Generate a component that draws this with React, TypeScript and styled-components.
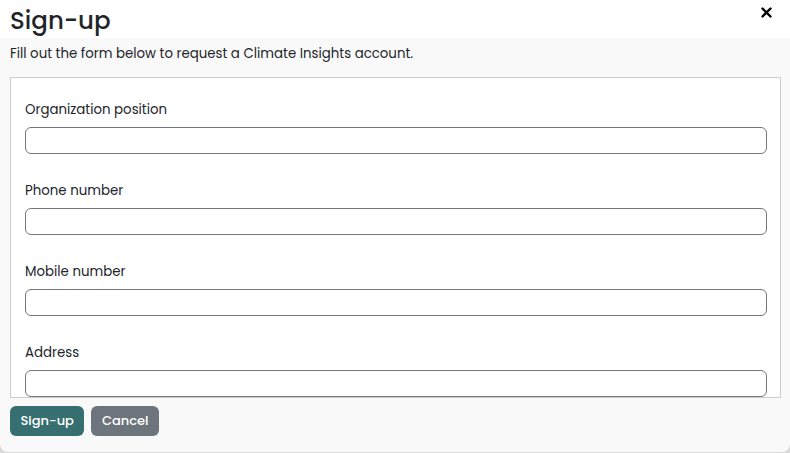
import React from "react";
import styled, { createGlobalStyle } from "styled-components";

const Global = createGlobalStyle`
  html, body { margin: 0; padding: 0; background: #d9d9d9; }
  body { font-family: Poppins, "Open Sans", "Liberation Sans", sans-serif; color: #212529; }
  * { box-sizing: border-box; }
`;

const Modal = styled.div`
  width: 790px;
  height: 452px;
  background: #f9f9f9;
  border-radius: 0 0 8px 8px;
  display: flex;
  flex-direction: column;
  overflow: hidden;
`;

const Header = styled.div`
  background: #ffffff;
  height: 38px;
  padding: 0 10px;
  display: flex;
  align-items: flex-start;
  justify-content: space-between;
`;

const Title = styled.h1`
  margin: 4px 0 0;
  font-size: 24.5px;
  font-weight: 500;
  line-height: 34px;
  color: #212529;
`;

const Close = styled.button`
  border: none;
  background: none;
  padding: 0;
  margin: 5px 7px 0 0;
  width: 14px;
  height: 14px;
  display: flex;
  align-items: center;
  justify-content: center;
  cursor: pointer;
`;

const Body = styled.div`
  padding: 6px 9px 0 10px;
  display: flex;
  flex-direction: column;
`;

const Intro = styled.p`
  margin: 0;
  font-size: 13.33px;
  line-height: 20px;
  color: #212529;
`;

const FormBox = styled.div`
  margin-top: 13px;
  height: 321px;
  border: 1px solid #cccccc;
  background: #ffffff;
  padding: 23px 13px 0 14px;
  overflow: hidden;
  display: flex;
  flex-direction: column;
  gap: 28px;
`;

const Field = styled.div`
  display: flex;
  flex-direction: column;
  gap: 8px;
`;

const Label = styled.label`
  font-size: 13.33px;
  line-height: 18px;
  color: #212529;
`;

const Input = styled.input`
  flex: none;
  height: 27px;
  border: 1px solid #767676;
  border-radius: 6px;
  background: #fff;
  font: inherit;
  padding: 0 8px;
`;

const Footer = styled.div`
  padding: 8px 10px 0;
  display: flex;
  gap: 7px;
`;

const Button = styled.button<{ $variant: "primary" | "secondary" }>`
  height: 30px;
  padding: 0 10.5px;
  border: none;
  border-radius: 6px;
  font-family: inherit;
  font-size: 13px;
  font-weight: 500;
  color: #ffffff;
  background: ${(p) => (p.$variant === "primary" ? "#376f70" : "#6c757d")};
  cursor: pointer;
`;

const fields = ["Organization position", "Phone number", "Mobile number", "Address"];

export default function App() {
  return (
    <>
      <Global />
      <Modal>
        <Header>
          <Title>Sign-up</Title>
          <Close aria-label="Close">
            <svg width="11" height="11" viewBox="0 0 11 11">
              <path d="M1.5 1.5 L9.5 9.5 M9.5 1.5 L1.5 9.5" stroke="#000" strokeWidth="2.4" strokeLinecap="round" />
            </svg>
          </Close>
        </Header>
        <Body>
          <Intro>Fill out the form below to request a Climate Insights account.</Intro>
          <FormBox>
            {fields.map((f) => (
              <Field key={f}>
                <Label>{f}</Label>
                <Input />
              </Field>
            ))}
          </FormBox>
        </Body>
        <Footer>
          <Button $variant="primary">Sign-up</Button>
          <Button $variant="secondary">Cancel</Button>
        </Footer>
      </Modal>
    </>
  );
}
